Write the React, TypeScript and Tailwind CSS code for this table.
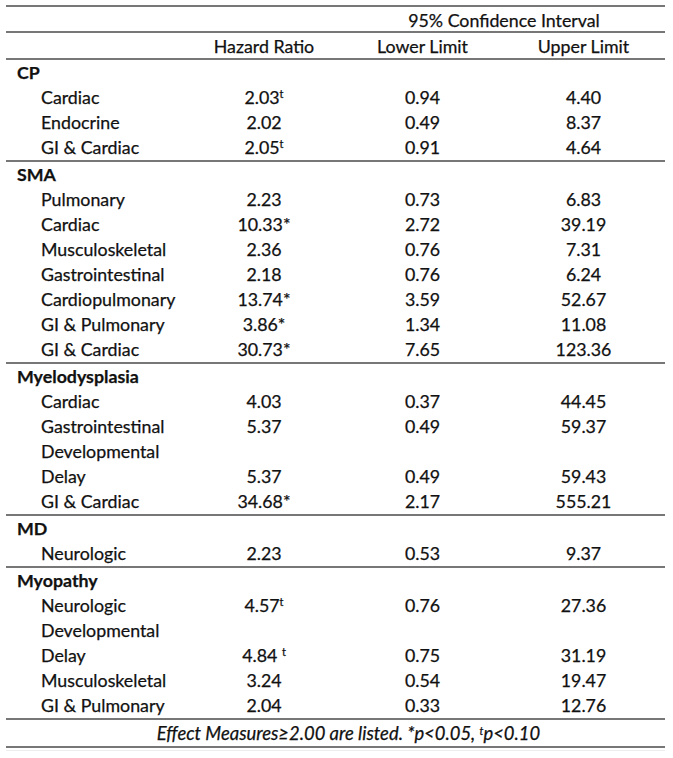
import React from "react";

type Row = { label: string; hr?: string; mark?: string; lo?: string; hi?: string };
type Group = { name: string; rows: Row[] };

const groups: Group[] = [
  {
    name: "CP",
    rows: [
      { label: "Cardiac", hr: "2.03", mark: "t", lo: "0.94", hi: "4.40" },
      { label: "Endocrine", hr: "2.02", lo: "0.49", hi: "8.37" },
      { label: "GI & Cardiac", hr: "2.05", mark: "t", lo: "0.91", hi: "4.64" },
    ],
  },
  {
    name: "SMA",
    rows: [
      { label: "Pulmonary", hr: "2.23", lo: "0.73", hi: "6.83" },
      { label: "Cardiac", hr: "10.33*", lo: "2.72", hi: "39.19" },
      { label: "Musculoskeletal", hr: "2.36", lo: "0.76", hi: "7.31" },
      { label: "Gastrointestinal", hr: "2.18", lo: "0.76", hi: "6.24" },
      { label: "Cardiopulmonary", hr: "13.74*", lo: "3.59", hi: "52.67" },
      { label: "GI & Pulmonary", hr: "3.86*", lo: "1.34", hi: "11.08" },
      { label: "GI & Cardiac", hr: "30.73*", lo: "7.65", hi: "123.36" },
    ],
  },
  {
    name: "Myelodysplasia",
    rows: [
      { label: "Cardiac", hr: "4.03", lo: "0.37", hi: "44.45" },
      { label: "Gastrointestinal", hr: "5.37", lo: "0.49", hi: "59.37" },
      { label: "Developmental" },
      { label: "Delay", hr: "5.37", lo: "0.49", hi: "59.43" },
      { label: "GI & Cardiac", hr: "34.68*", lo: "2.17", hi: "555.21" },
    ],
  },
  {
    name: "MD",
    rows: [{ label: "Neurologic", hr: "2.23", lo: "0.53", hi: "9.37" }],
  },
  {
    name: "Myopathy",
    rows: [
      { label: "Neurologic", hr: "4.57", mark: "t", lo: "0.76", hi: "27.36" },
      { label: "Developmental" },
      { label: "Delay", hr: "4.84 ", mark: "t", lo: "0.75", hi: "31.19" },
      { label: "Musculoskeletal", hr: "3.24", lo: "0.54", hi: "19.47" },
      { label: "GI & Pulmonary", hr: "2.04", lo: "0.33", hi: "12.76" },
    ],
  },
];

// shared column template so every row lines up
const cols = "grid grid-cols-[179px_158px_159px_163px] h-[25px] items-center leading-none";

function DataRow({ row }: { row: Row }) {
  return (
    <div className={cols}>
      <div className="pl-[35px] whitespace-nowrap">{row.label}</div>
      <div className="text-center whitespace-pre">
        {row.hr}
        {row.mark && <sup className="text-[11px] leading-none">{row.mark}</sup>}
      </div>
      <div className="text-center">{row.lo}</div>
      <div className="text-center">{row.hi}</div>
    </div>
  );
}

export default function App() {
  return (
    <div
      className="min-h-[758px] w-[673px] bg-white pt-[5px] text-[17.8px] text-[#111] [-webkit-text-stroke:0.25px_#111]"
      style={{ fontFamily: 'Lato, "Open Sans", "Liberation Sans", sans-serif' }}
    >
      <div className="ml-[6px] w-[659px] border-y-2 border-[#777]">
        {/* CI span header */}
        <div className="grid h-[26px] grid-cols-[179px_158px_322px] items-center border-b-2 border-[#777] pt-[3px] leading-none">
          <div />
          <div />
          <div className="text-center">95% Confidence Interval</div>
        </div>

        {/* Column headers */}
        <div className="grid h-[27px] grid-cols-[179px_158px_159px_163px] items-center border-b-2 border-[#777] pt-[3px] leading-none">
          <div />
          <div className="text-center">Hazard Ratio</div>
          <div className="text-center">Lower Limit</div>
          <div className="text-center">Upper Limit</div>
        </div>

        {groups.map((g) => (
          <div key={g.name} className="border-b-2 border-[#777]">
            <div className="flex h-[25px] items-center pl-[11px] font-bold leading-none">{g.name}</div>
            {g.rows.map((r, i) => (
              <DataRow key={i} row={r} />
            ))}
          </div>
        ))}

        {/* Footnote */}
        <div className="flex h-[26px] items-center justify-center pl-[26px] pt-[1px] text-[18.4px] italic leading-none">
          <span>
            Effect Measures≥2.00 are listed. *p&lt;0.05, <sup className="text-[11px] leading-none">t</sup>p&lt;0.10
          </span>
        </div>
      </div>
      <div className="ml-[6px] mt-[2px] h-px w-[659px] bg-[#eee]" />
    </div>
  );
}
